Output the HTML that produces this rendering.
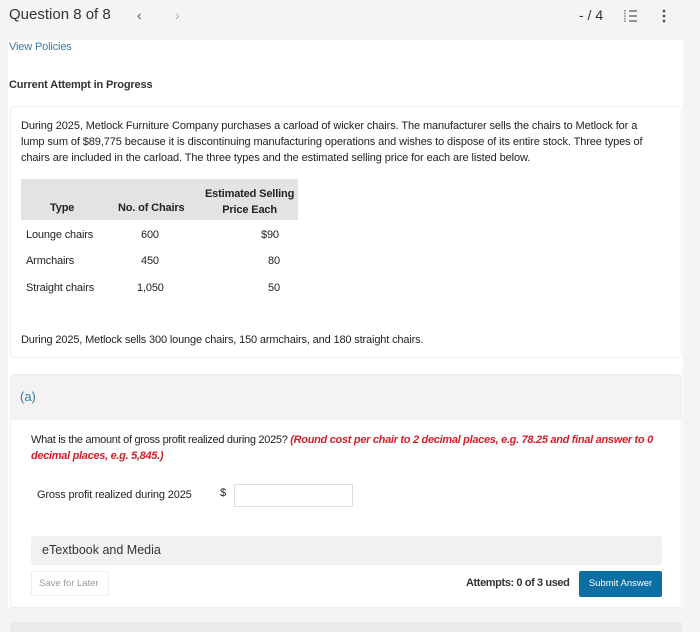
<!DOCTYPE html>
<html><head><style>
*{margin:0;padding:0;box-sizing:border-box}
body{width:700px;height:628px;background:#f4f4f4;font-family:"Liberation Sans",sans-serif;color:#222;position:relative;overflow:hidden}
.a{position:absolute;white-space:nowrap}
.s{font-size:11px;letter-spacing:-0.15px}
</style></head><body>
<div class="a" style="left:9px;top:6px;font-size:15px;color:#333">Question 8 of 8</div>
<div class="a" style="left:137px;top:7px;font-size:14px;color:#555">&lsaquo;</div>
<div class="a" style="left:175px;top:7px;font-size:14px;color:#aaa">&rsaquo;</div>
<div class="a" style="left:579px;top:7px;font-size:14px;color:#333">- / 4</div>
<svg class="a" style="left:624px;top:9px" width="14" height="14"><g stroke="#555" stroke-width="1.2"><line x1="5" y1="2" x2="13" y2="2"/><line x1="5" y1="7" x2="13" y2="7"/><line x1="5" y1="12" x2="13" y2="12"/><line x1="1" y1="1" x2="1" y2="13" stroke-dasharray="1.5 1.2"/></g></svg>
<svg class="a" style="left:662px;top:9px" width="4" height="14"><circle cx="2" cy="2" r="1.3" fill="#444"/><circle cx="2" cy="7" r="1.3" fill="#444"/><circle cx="2" cy="12" r="1.3" fill="#444"/></svg>
<div class="a" style="left:8px;top:40px;width:675px;height:568px;background:#fff"></div>
<div class="a s" style="left:9px;top:41px;color:#3a7ca5">View Policies</div>
<div class="a s" style="left:9px;top:79px;font-weight:bold;color:#333">Current Attempt in Progress</div>
<div class="a" style="left:10px;top:106px;width:672px;height:252px;border:1px solid #eee;border-radius:3px;background:#fff"></div>
<div class="a s" style="left:21px;top:118px;line-height:16px;letter-spacing:-0.1px">During 2025, Metlock Furniture Company purchases a carload of wicker chairs. The manufacturer sells the chairs to Metlock for a<br>lump sum of $89,775 because it is discontinuing manufacturing operations and wishes to dispose of its entire stock. Three types of<br>chairs are included in the carload. The three types and the estimated selling price for each are listed below.</div>
<div class="a" style="left:21px;top:179px;width:277px;height:41px;background:#e3e3e3"></div>
<div class="a s" style="left:50px;top:202px;font-weight:bold">Type</div>
<div class="a s" style="left:118px;top:202px;font-weight:bold">No. of Chairs</div>
<div class="a s" style="left:205px;top:186px;font-weight:bold;text-align:center;line-height:16px">Estimated Selling<br>Price Each</div>
<div class="a s" style="left:26px;top:229px">Lounge chairs</div>
<div class="a s" style="left:141px;top:229px">600</div>
<div class="a s" style="left:261px;top:229px">$90</div>
<div class="a s" style="left:268px;top:255px">80</div>
<div class="a s" style="left:26px;top:255px">Armchairs</div>
<div class="a s" style="left:141px;top:255px">450</div>
<div class="a s" style="left:26px;top:282px">Straight chairs</div>
<div class="a s" style="left:137px;top:282px">1,050</div>
<div class="a s" style="left:268px;top:282px">50</div>
<div class="a s" style="left:21px;top:334px">During 2025, Metlock sells 300 lounge chairs, 150 armchairs, and 180 straight chairs.</div>
<div class="a" style="left:10px;top:374px;width:672px;height:234px;border:1px solid #eee;border-radius:3px;background:#fff"></div>
<div class="a" style="left:11px;top:375px;width:670px;height:45px;background:#f3f3f3"></div>
<div class="a" style="left:20px;top:389px;font-size:13px;color:#3a7ca5">(a)</div>
<div class="a s" style="left:31px;top:432px;line-height:16px;white-space:normal;width:640px;letter-spacing:-0.3px">What is the amount of gross profit realized during 2025? <i style="color:#d0202a;font-weight:bold">(Round cost per chair to 2 decimal places, e.g. 78.25 and final answer to 0 decimal places, e.g. 5,845.)</i></div>
<div class="a s" style="left:37px;top:489px">Gross profit realized during 2025</div>
<div class="a s" style="left:220px;top:487px">$</div>
<div class="a" style="left:234px;top:484px;width:119px;height:23px;border:1px solid #ddd"></div>
<div class="a" style="left:31px;top:536px;width:631px;height:29px;background:#f1f1f1;border-radius:3px"></div>
<div class="a" style="left:42px;top:543px;font-size:12.5px;color:#333">eTextbook and Media</div>
<div class="a" style="left:31px;top:571px;width:78px;height:25px;border:1px solid #eee;border-radius:2px"></div>
<div class="a" style="left:39px;top:578px;font-size:9.5px;color:#999">Save for Later</div>
<div class="a s" style="left:466px;top:577px;font-weight:bold;color:#333;letter-spacing:-0.4px">Attempts: 0 of 3 used</div>
<div class="a" style="left:579px;top:571px;width:83px;height:26px;background:#0b6fa4;border-radius:2px;color:#fff;font-size:9.5px;text-align:center;line-height:26px">Submit Answer</div>
<div class="a" style="left:10px;top:622px;width:672px;height:10px;background:#eaeaea"></div>
</body></html>
